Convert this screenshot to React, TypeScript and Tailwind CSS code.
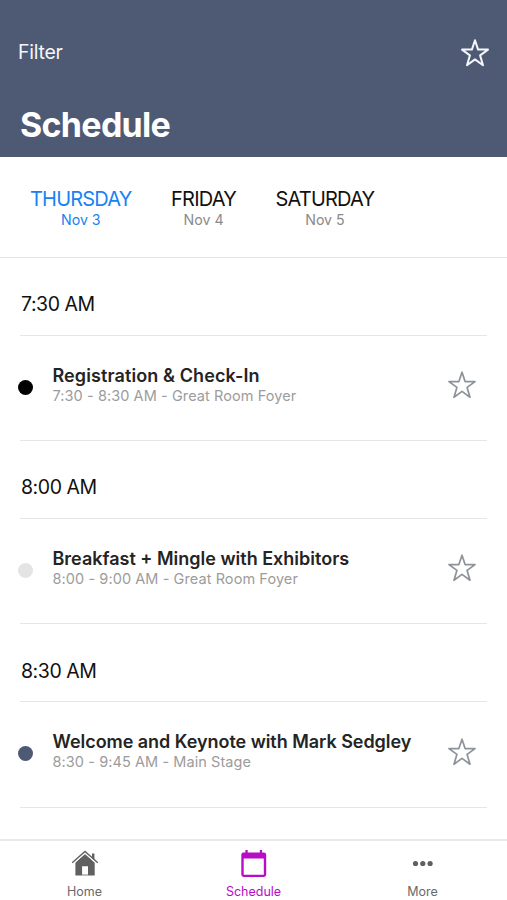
const days = [
  { name: 'THURSDAY', date: 'Nov 3', active: true },
  { name: 'FRIDAY', date: 'Nov 4', active: false },
  { name: 'SATURDAY', date: 'Nov 5', active: false },
];

const sessions = [
  {
    start: '7:30 AM',
    title: 'Registration & Check-In',
    detail: '7:30 - 8:30 AM - Great Room Foyer',
    dot: 'bg-black',
    tracking: 'tracking-[0.1px]',
  },
  {
    start: '8:00 AM',
    title: 'Breakfast + Mingle with Exhibitors',
    detail: '8:00 - 9:00 AM - Great Room Foyer',
    dot: 'bg-[#e4e4e4]',
    tracking: 'tracking-[0px]',
  },
  {
    start: '8:30 AM',
    title: 'Welcome and Keynote with Mark Sedgley',
    detail: '8:30 - 9:45 AM - Main Stage',
    dot: 'bg-[#4e5a73]',
    tracking: 'tracking-[-0.04px]',
  },
];

function StarIcon({ className }: { className: string }) {
  return (
    <svg viewBox="0 0 30 30" className={className} fill="none" stroke="currentColor" strokeLinejoin="round">
      <path d="M15 2.2 L18.1 11.6 H28 L20.1 17.4 L23 27.2 L15 21.4 L7 27.2 L9.9 17.4 L2 11.6 H11.9 Z" />
    </svg>
  );
}

function HomeIcon() {
  return (
    <svg viewBox="0 0 28 28" className="w-7 h-7 text-[#606060]" fill="currentColor">
      <path d="M14 3.8 L23.7 12.4 V25.4 H17 V16.2 H11.1 V25.4 H4.4 V12.4 Z" />
      <path d="M11.1 24.6 H17 V25.4 H11.1 Z" />
      <path d="M21 3.6 H23.4 V10.3 L21 8.2 Z" />
      <path d="M1.2 12.7 L14 1.5 L26.8 12.7" fill="none" stroke="currentColor" strokeWidth="1.4" />
      <path d="M2.8 13.4 L14 3.6 L25.2 13.4" fill="none" stroke="white" strokeWidth="0.9" />
    </svg>
  );
}

function CalendarIcon() {
  return (
    <svg viewBox="0 0 28 28" className="w-7 h-7 text-[#b80dc6]" fill="currentColor">
      <path
        fillRule="evenodd"
        d="M3.6 2.4 H5.4 V0 H7.7 V2.4 H19.8 V0 H22.1 V2.4 H23.9 Q26.2 2.4 26.2 4.8 V24.6 Q26.2 27 23.9 27 H3.6 Q1.3 27 1.3 24.6 V4.8 Q1.3 2.4 3.6 2.4 Z M3.7 8.4 V24.8 H23.8 V8.4 Z"
      />
    </svg>
  );
}

function MoreIcon() {
  return (
    <svg viewBox="0 0 28 28" className="w-7 h-7 text-[#5f5f5f]" fill="currentColor">
      <circle cx="6.5" cy="13.5" r="2.6" />
      <circle cx="13.8" cy="13.5" r="2.6" />
      <circle cx="21.1" cy="13.5" r="2.6" />
    </svg>
  );
}

function Header() {
  return (
    <header className="h-[157px] bg-[#4e5a73] text-white">
      <div className="flex items-start justify-between pt-[37px] pl-[18px] pr-[17px]">
        <span className="text-[19.5px] leading-[30px] tracking-[-0.25px] text-[#f3f6fb]">Filter</span>
        <StarIcon className="w-[30px] h-[30px] mt-[0.5px] [stroke-width:2] text-[#f3f6fb]" />
      </div>
      <h1 className="pl-5 pt-[37px] text-[34px] leading-10 font-bold tracking-[-0.7px]">Schedule</h1>
    </header>
  );
}

function DayTabs() {
  return (
    <nav className="h-[101px] border-b border-[#e4e4e4] pl-[30px] pt-8 flex items-start gap-[39.5px]">
      {days.map((day) => (
        <div key={day.name} className={day.active ? 'text-center text-[#1a82f0]' : 'text-center text-[#111]'}>
          <div className="text-[20px] leading-5 tracking-[-0.8px]">{day.name}</div>
          <div className={day.active ? 'text-[14.2px] leading-[21px]' : 'text-[14.2px] leading-[21px] text-[#8a8a8a]'}>
            {day.date}
          </div>
        </div>
      ))}
    </nav>
  );
}

export default function App() {
  return (
    <div className="w-[507px] h-[900px] overflow-hidden bg-white flex flex-col font-['Inter',sans-serif]">
      <Header />
      <DayTabs />

      {/* Sessions grouped by start time */}
      <main className="flex-1 px-5">
        {sessions.map((session) => (
          <section key={session.start} className="h-[183.25px]">
            <h2 className="h-[77.5px] pt-8 pl-px border-b border-[#e6e6e6] text-[19.5px] leading-7 tracking-[-0.45px] text-[#111]">
              {session.start}
            </h2>
            <div className="h-[105.5px] -ml-0.5 flex items-start pt-[30px]">
              <span className={`mt-[14px] w-[15px] h-[15px] rounded-full ${session.dot}`} />
              <div className="ml-[19.5px] flex-1">
                <div className={`text-[18px] leading-5 font-semibold text-[#242424] ${session.tracking}`}>{session.title}</div>
                <div className="text-[14.5px] leading-5 tracking-[0.08px] text-[#9c9c9c]">{session.detail}</div>
              </div>
              <StarIcon className="w-[30px] h-[30px] mr-2.5 mt-[4.5px] [stroke-width:1.7] text-[#8c9299]" />
            </div>
            <div className="-mt-px h-px bg-[#e6e6e6]" />
          </section>
        ))}
      </main>

      <footer className="h-[61px] border-t-2 border-[#e9e9e9] grid grid-cols-3 pt-[9px] text-[12.5px] text-[#6a6a6a]">
        <div className="flex flex-col items-center">
          <HomeIcon />
          <span className="leading-4 mt-[6px]">Home</span>
        </div>
        <div className="flex flex-col items-center text-[#b80dc6]">
          <CalendarIcon />
          <span className="leading-4 mt-[6px]">Schedule</span>
        </div>
        <div className="flex flex-col items-center">
          <MoreIcon />
          <span className="leading-4 mt-[6px]">More</span>
        </div>
      </footer>
    </div>
  );
}
